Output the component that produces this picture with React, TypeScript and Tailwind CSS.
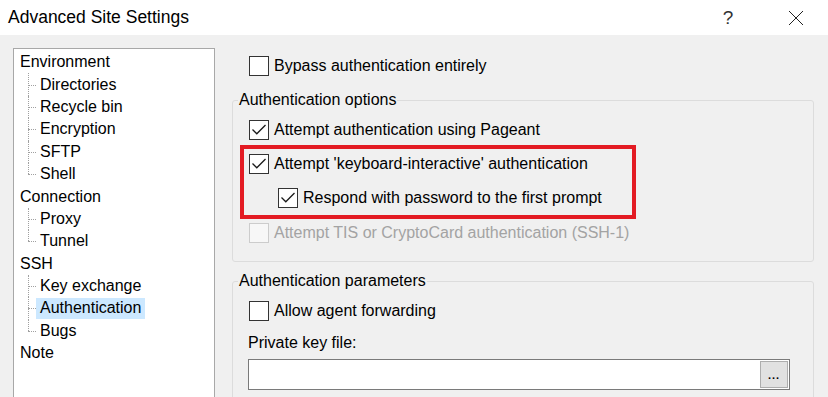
import type { ReactNode } from 'react'

const FONT = { fontFamily: '"Liberation Sans", Arial, sans-serif' }

type Node = { label: string; kids?: string[] }

const TREE: Node[] = [
  { label: 'Environment', kids: ['Directories', 'Recycle bin', 'Encryption', 'SFTP', 'Shell'] },
  { label: 'Connection', kids: ['Proxy', 'Tunnel'] },
  { label: 'SSH', kids: ['Key exchange', 'Authentication', 'Bugs'] },
  { label: 'Note' },
]

function Box({ checked, disabled }: { checked?: boolean; disabled?: boolean }) {
  return (
    <span
      className={
        'flex h-[20px] w-[20px] shrink-0 items-center justify-center border ' +
        (disabled ? 'border-[#cccccc] bg-[#f7f7f7]' : 'border-[#333333] bg-white')
      }
    >
      {checked && (
        <svg width="18" height="18" viewBox="0 0 18 18">
          <polyline points="2.5,8.5 6.8,12.8 15.5,4" fill="none" stroke="#1a1a1a" strokeWidth="1.3" />
        </svg>
      )}
    </span>
  )
}

function Check({ label, checked, disabled }: { label: string; checked?: boolean; disabled?: boolean }) {
  return (
    <div className="flex h-[20px] items-center gap-[5px]">
      <Box checked={checked} disabled={disabled} />
      <span className={'leading-[20px] ' + (disabled ? 'text-[#a3a3a3]' : 'text-black')}>{label}</span>
    </div>
  )
}

function Group({ title, children, className }: { title: string; children: ReactNode; className?: string }) {
  return (
    <fieldset className={'rounded-[3px] border border-[#dcdcdc] ' + (className ?? '')}>
      <legend className="ml-[5px] px-[1px] leading-[20px] text-black">{title}</legend>
      {children}
    </fieldset>
  )
}

function TreeRow({ label, child, last, selected }: { label: string; child?: boolean; last?: boolean; selected?: boolean }) {
  if (!child) {
    return <div className="flex h-[22.4px] items-center pl-[6px] leading-[20px]">{label}</div>
  }
  return (
    <div className="flex h-[22.4px] items-center pl-[6px]">
      <span className="relative h-full w-[16px] shrink-0">
        <span className={'absolute left-[8px] top-0 border-l border-dotted border-[#a0a0a0] ' + (last ? 'h-1/2' : 'h-full')} />
        <span className="absolute left-[8px] top-1/2 w-[8px] border-t border-dotted border-[#a0a0a0]" />
      </span>
      <span className={'flex h-[21px] items-center px-[4px] leading-[20px] ' + (selected ? 'bg-[#cce8ff]' : '')}>{label}</span>
    </div>
  )
}

export default function App() {
  return (
    <div className="h-[397px] w-[828px] overflow-hidden bg-[#f0f0f0] text-[16px] text-black" style={FONT}>
      {/* title bar */}
      <div className="flex h-[35px] items-center bg-white pl-[8px]">
        <span className="text-[17.5px] leading-none">Advanced Site Settings</span>
        <span className="ml-auto w-[20px] text-center text-[19px] font-light leading-none text-[#333]">?</span>
        <span className="ml-[50px] mr-[24px] flex h-[16px] w-[16px] items-center justify-center">
          <svg width="16" height="16" viewBox="0 0 16 16">
            <path d="M1 1 L15 15 M15 1 L1 15" stroke="#222" strokeWidth="1" />
          </svg>
        </span>
      </div>

      <div className="flex pl-[13px] pt-[13px]">
        {/* tree */}
        <div className="h-[360px] w-[202px] shrink-0 border border-[#a8a8a8] bg-white pt-[2px]">
          {TREE.map((n) => (
            <div key={n.label}>
              <TreeRow label={n.label} />
              {n.kids?.map((k, i) => (
                <TreeRow key={k} label={k} child last={i === n.kids!.length - 1} selected={k === 'Authentication'} />
              ))}
            </div>
          ))}
        </div>

        {/* settings */}
        <div className="ml-[17px] w-[582px] shrink-0 pt-[8px]">
          <div className="pl-[17px]">
            <Check label="Bypass authentication entirely" />
          </div>

          <Group title="Authentication options" className="mt-[14px] pb-[18px]">
            <div className="mt-[10px] pl-[16px]">
              <Check label="Attempt authentication using Pageant" checked />
            </div>
            <div className="ml-[7px] mt-[5px] w-[396px] border-4 border-[#e31b23] pb-[7px] pl-[5px] pt-[5px]">
              <Check label="Attempt 'keyboard-interactive' authentication" checked />
              <div className="mt-[14px] pl-[29px]">
                <Check label="Respond with password to the first prompt" checked />
              </div>
            </div>
            <div className="mt-[4px] pl-[16px]">
              <Check label="Attempt TIS or CryptoCard authentication (SSH-1)" disabled />
            </div>
          </Group>

          <Group title="Authentication parameters" className="mt-[9px] pb-[20px]">
            <div className="mt-[10px] pl-[16px]">
              <Check label="Allow agent forwarding" />
            </div>
            <div className="mt-[12px] pl-[15px] leading-[20px]">Private key file:</div>
            <div className="ml-[15px] mt-[6px] flex h-[31px] w-[542px] items-center justify-end border border-[#7a7a7a] bg-white pr-[1px]">
              <span className="flex h-[27px] w-[28px] items-end justify-center border border-[#adadad] bg-[#e1e1e1] pb-[6px] text-[11px] font-bold leading-none tracking-[1px]">
                ...
              </span>
            </div>
          </Group>
        </div>
      </div>
    </div>
  )
}
